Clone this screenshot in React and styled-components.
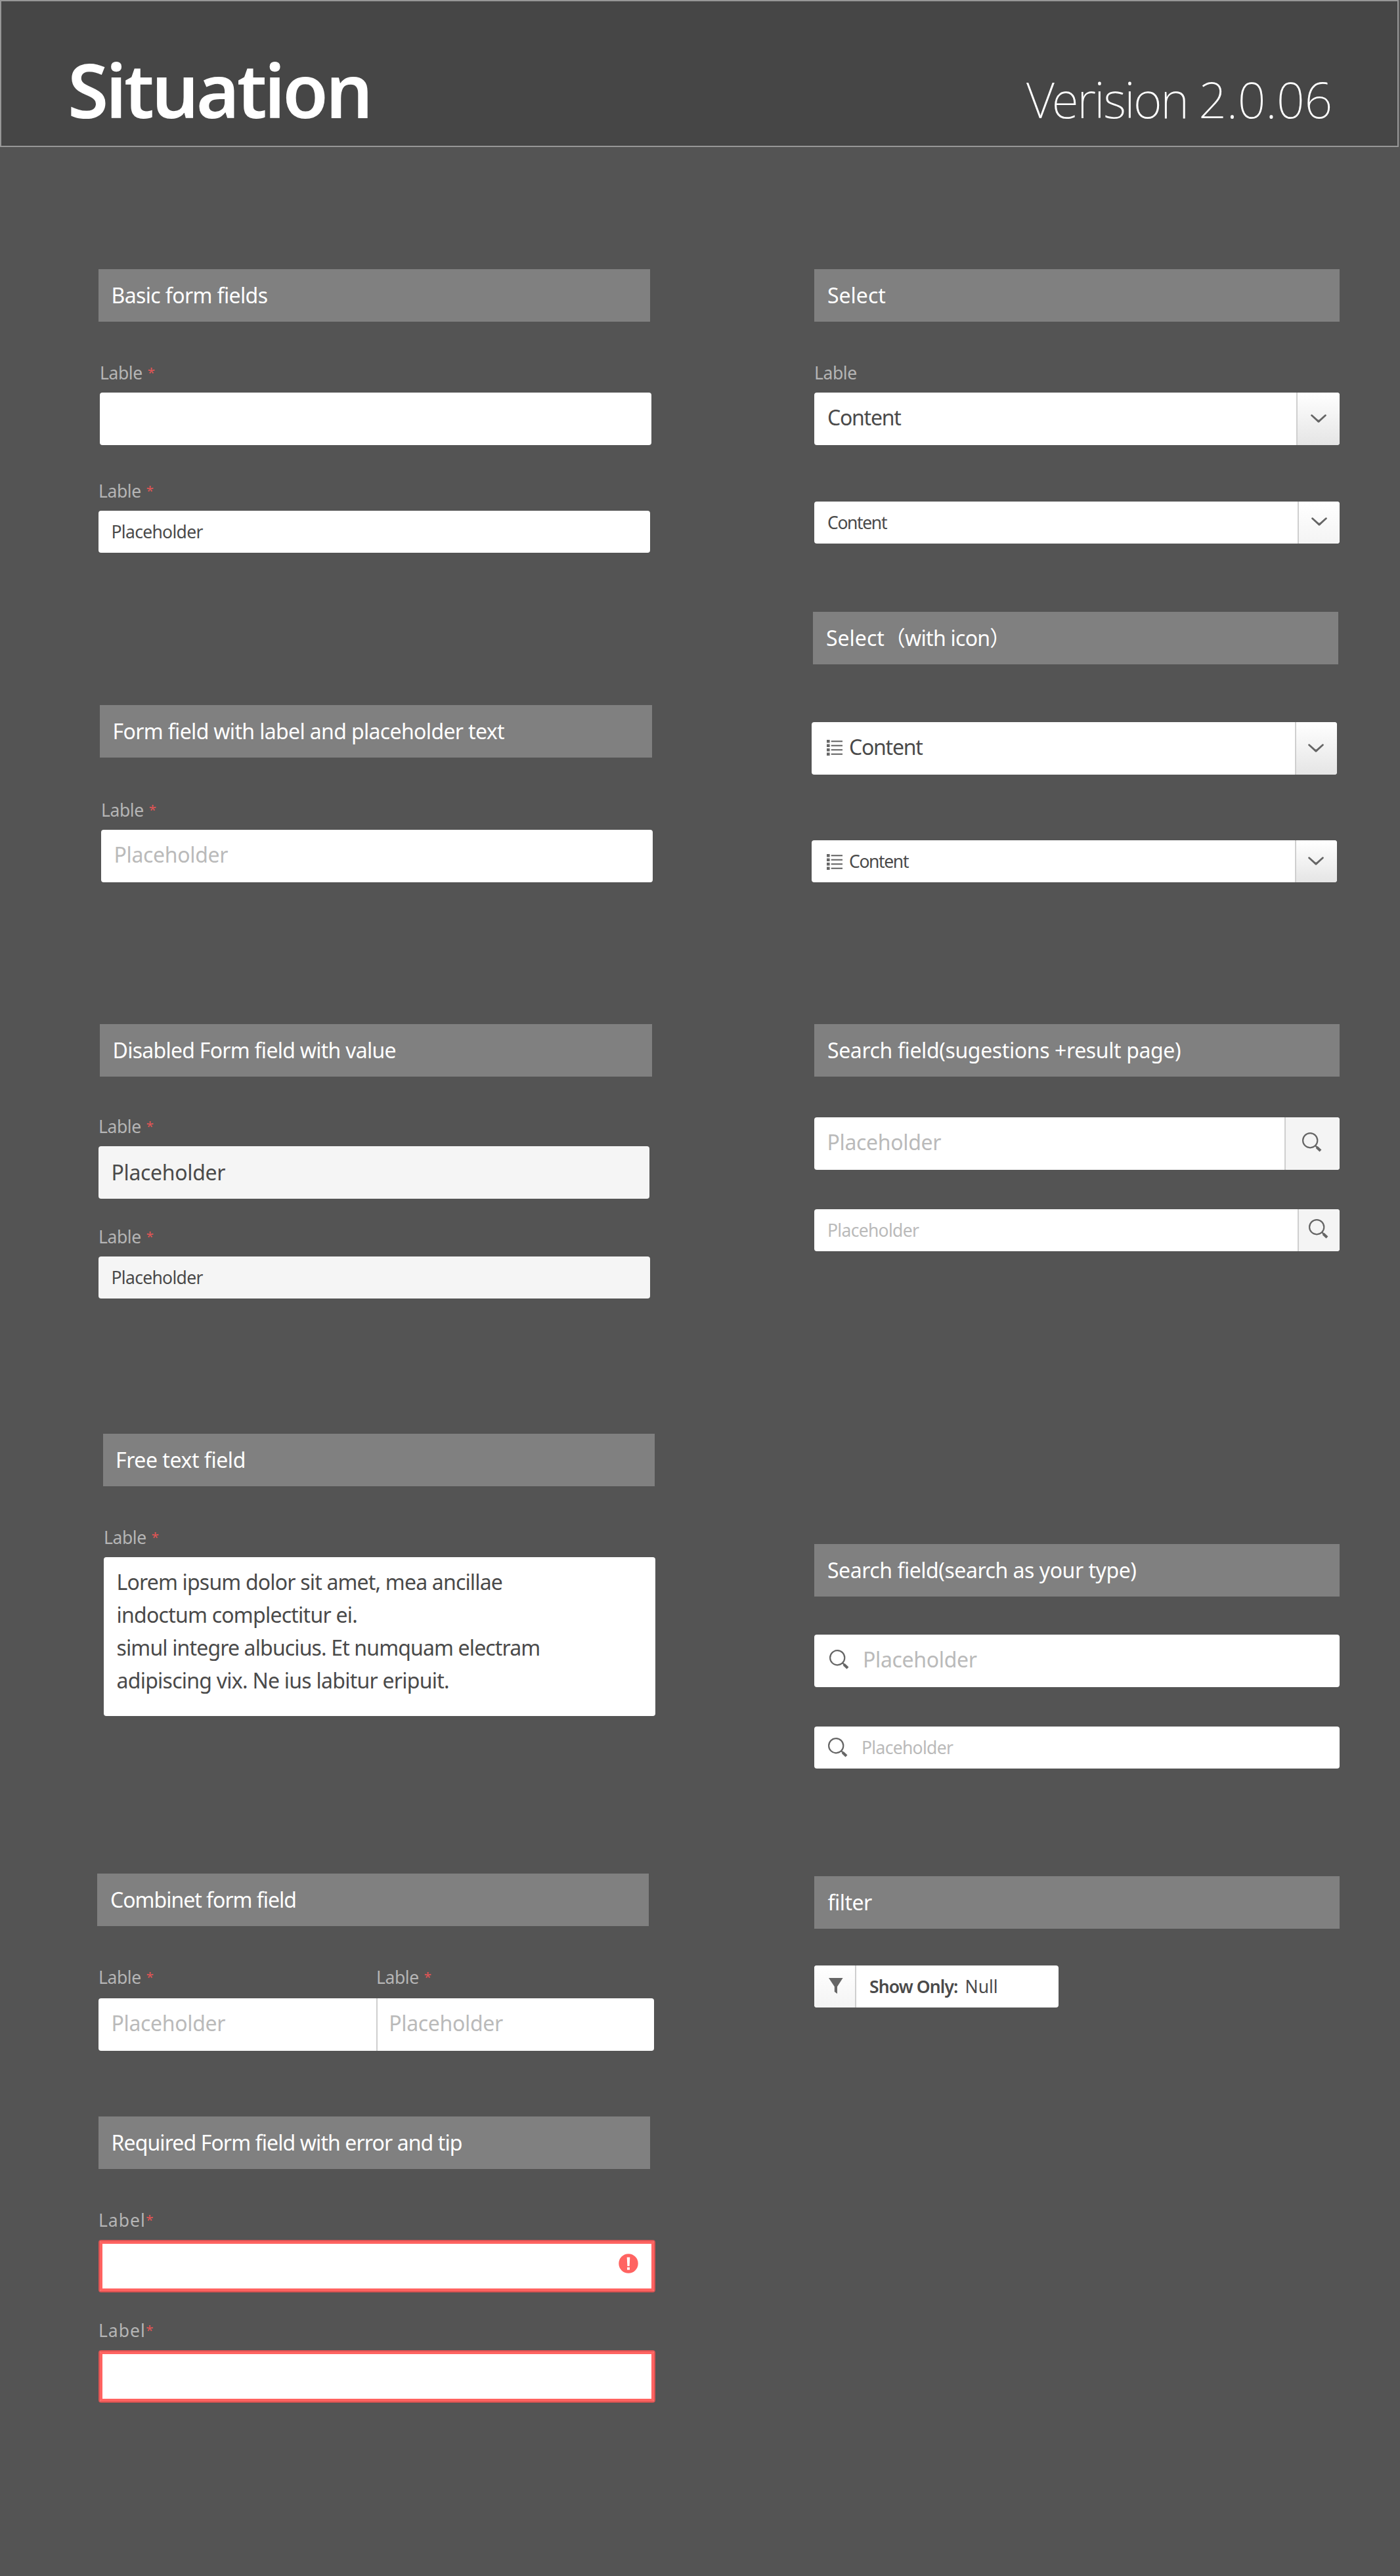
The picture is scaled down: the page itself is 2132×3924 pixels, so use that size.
import React from "react";
import styled, { createGlobalStyle, css } from "styled-components";

const GlobalStyle = createGlobalStyle`
  * { box-sizing: border-box; }
  body {
    margin: 0;
    background: #545454;
    font-family: "Noto Sans", "Noto Sans CJK SC", sans-serif;
    font-size: 32px;
    color: #4a4a4a;
  }
`;

const Page = styled.main`
  width: 2132px;
  height: 3924px;
  background: #545454;
`;

const Header = styled.header`
  display: flex;
  justify-content: space-between;
  align-items: baseline;
  width: 2130px;
  height: 224px;
  padding: 78px 99px 0 101px;
  border: 2px solid #979797;
  background: #464646;
  color: #fff;
`;

const Title = styled.h1`
  margin: 0;
  font-size: 113px;
  line-height: 112px;
  font-weight: 600;
  letter-spacing: -4.1px;
`;

const Version = styled.span`
  font-size: 75px;
  line-height: 80px;
  font-weight: 200;
  letter-spacing: -2.5px;
  white-space: nowrap;
`;

const VersionNumber = styled.span`
  letter-spacing: -0.3px;
`;

const Columns = styled.div`
  display: grid;
  grid-template-columns: 1088px 804px;
  padding: 186px 0 0 148px;
`;

const Column = styled.div`
  display: flex;
  flex-direction: column;
`;

const Section = styled.section`
  display: flex;
  flex-direction: column;
  margin-top: ${(p) => p.$gap || 0}px;
`;

const Bar = styled.h2`
  display: flex;
  align-items: center;
  width: ${(p) => p.$width || 840}px;
  height: 80px;
  margin: 0 0 0 ${(p) => p.$indent || 0}px;
  padding: 0 0 0 ${(p) => p.$pad || 19.5}px;
  background: #808080;
  color: #fff;
  font-size: 32px;
  line-height: 44px;
  font-weight: 400;
  white-space: nowrap;
  letter-spacing: ${(p) => p.$track || 0}px;
`;

const Untracked = styled.span`
  letter-spacing: 0;
`;

const Group = styled.div`
  width: ${(p) => p.$width || 840}px;
  margin: ${(p) => p.$gap}px 0 0 ${(p) => p.$indent || 0}px;
`;

const LabelRow = styled.div`
  display: flex;
  height: 50px;
  padding-bottom: 10px;
`;

const LabelText = styled.label`
  flex: 1;
  color: #b5b5b5;
  font-size: 26.5px;
  line-height: 40px;
  letter-spacing: ${(p) => (p.$wide ? 0.98 : -0.43)}px;
`;

const Star = styled.span`
  margin-left: ${(p) => (p.$wide ? 0.5 : 8)}px;
  color: #e05555;
  font-size: 20.5px;
  line-height: 0;
  vertical-align: 3px;
`;

const Control = styled.div`
  display: flex;
  height: ${(p) => (p.$small ? 64 : 80)}px;
  width: ${(p) => (p.$width ? `${p.$width}px` : "100%")};
  border-radius: 4px;
  overflow: hidden;
  background: ${(p) => (p.$disabled ? "#f5f5f5" : "#fff")};
  ${(p) =>
    p.$error &&
    css`
      border: 2px solid #dc5352;
      box-shadow: inset 0 0 0 4px #ff6361;
      justify-content: flex-end;
      padding: 19px 24px 0 0;
    `}
`;

const Value = styled.div`
  flex: 1;
  display: flex;
  align-items: center;
  gap: ${(p) => p.$gap || 10}px;
  padding-left: ${(p) => p.$pad || 19.5}px;
  padding-bottom: ${(p) => (p.$raised ? 4 : 0)}px;
  color: ${(p) => (p.$muted ? "#bababa" : "#4a4a4a")};
  font-size: ${(p) => (p.$small ? 26.5 : 32)}px;
  line-height: 44px;
  letter-spacing: ${(p) => p.$track || 0}px;
  white-space: nowrap;
`;

const Half = styled(Value)`
  & + & {
    border-left: 2px solid #cfcfcf;
    padding-left: 17px;
  }
`;

const Adornment = styled.div`
  display: flex;
  align-items: center;
  justify-content: center;
  width: ${(p) => p.$width}px;
  padding-bottom: ${(p) => p.$lift || 0}px;
  padding-right: ${(p) => p.$shift || 0}px;
  border-left: 2px solid #cfcfcf;
  background: ${(p) => p.$fill};
`;

const FilterButton = styled(Adornment)`
  border-left: 0;
  border-right: 2px solid #cfcfcf;
  padding-left: 4px;
`;

const Strong = styled.b`
  font-weight: 600;
  letter-spacing: -0.88px;
`;

const TextArea = styled.div`
  display: flex;
  flex-direction: column;
  height: 242px;
  padding: 13px 0 0 19.5px;
  border-radius: 4px;
  background: #fff;
  line-height: 50px;
`;

const TextLine = styled.span`
  white-space: nowrap;
  letter-spacing: ${(p) => p.$track}px;
`;

const Icon = styled.svg`
  display: block;
  flex: none;
  margin-top: ${(p) => p.$drop || 0}px;
`;

const STEEP = "linear-gradient(#ffffff, #e5e5e5)";
const SOFT = "linear-gradient(#ffffff, #f4f4f4)";
const FLAT = "#f4f4f4";

const ChevronIcon = () => (
  <Icon width="24" height="14" viewBox="0 0 24 14" fill="none" stroke="#666" strokeLinecap="round" strokeLinejoin="round">
    <path d="M1.6 1.8 L10 9.4 Q12 11.2 14 9.4 L22.4 1.8" strokeWidth="2.8" />
    <path d="M9 8.6 L12 10 L15 8.6 L12.9 11.4 Q12 12.2 11.1 11.4Z" fill="#666" strokeWidth="1.6" />
  </Icon>
);

const SearchIcon = () => (
  <Icon width="30" height="30" viewBox="0 0 30 30" fill="none" stroke="#666">
    <circle cx="12.2" cy="12.2" r="11.1" strokeWidth="2.2" />
    <path d="M20 20 L23 23" strokeWidth="2.4" />
    <path d="M22.2 22.4 L28 27.9" strokeWidth="4.2" />
  </Icon>
);

const LIST_ROWS = [0, 6.5, 13, 19.5];
const ListIcon = ({ drop }) => (
  <Icon width="24" height="24" viewBox="0 0 24 24" fill="#666" $drop={drop}>
    {LIST_ROWS.map((y) => (
      <g key={y}>
        <rect x="0" y={y} width="4.6" height="4.5" />
        <rect x="6.7" y={y + 1.2} width="17.3" height="2.1" />
      </g>
    ))}
  </Icon>
);

const FunnelIcon = () => (
  <Icon width="22" height="24" viewBox="0 0 22 24" fill="#666">
    <path d="M0 0 H21.6 L13 13.2 V24 L8.8 21 V13.2 Z" />
  </Icon>
);

const AlertIcon = () => (
  <Icon width="30" height="30" viewBox="0 0 30 30">
    <circle cx="15" cy="15" r="14.7" fill="#ff6361" />
    <path d="M12.7 5.6 H17.3 L16.6 19 H13.4 Z" fill="#fff" />
    <rect x="13" y="20.8" width="4" height="3.8" fill="#fff" />
  </Icon>
);

const Label = ({ text = "Lable", required = true, wide }) => (
  <LabelText $wide={wide}>
    {text}
    {required && <Star $wide={wide}>*</Star>}
  </LabelText>
);

const Placeholder = ({ small, ...rest }) => (
  <Value $small={small} $track={small ? -0.7 : -0.34} {...rest}>
    Placeholder
  </Value>
);

const Select = ({ small, icon, fill, width = 66, lift, shift }) => (
  <Control $small={small}>
    <Value $small={small} $raised={!small} $pad={icon ? 23 : 20} $track={small ? -1.36 : -1.25}>
      {icon && <ListIcon drop={2} />}
      <span>Content</span>
    </Value>
    <Adornment $width={width} $fill={fill} $lift={lift} $shift={shift}>
      <ChevronIcon />
    </Adornment>
  </Control>
);

const FREE_TEXT = [
  ["Lorem ipsum dolor sit amet, mea ancillae", -0.82],
  ["indoctum complectitur ei.", -0.76],
  ["simul integre albucius. Et numquam electram", -0.86],
  ["adipiscing vix. Ne ius labitur eripuit.", -0.75],
];

export default function App() {
  return (
    <Page>
      <GlobalStyle />
      <Header>
        <Title>Situation</Title>
        <Version>Verision <VersionNumber>2.0.06</VersionNumber></Version>
      </Header>

      <Columns>
        <Column>
          <Section>
            <Bar $indent={2} $track={-0.62}>Basic form fields</Bar>
            <Group $gap={58} $indent={4}>
              <LabelRow><Label /></LabelRow>
              <Control />
            </Group>
            <Group $gap={50} $indent={2}>
              <LabelRow><Label /></LabelRow>
              <Control $small><Placeholder small $pad={19.5} /></Control>
            </Group>
          </Section>

          <Section $gap={232}>
            <Bar $indent={4} $width={841} $track={-0.65}>Form field with label and placeholder text</Bar>
            <Group $gap={60} $indent={6}>
              <LabelRow><Label /></LabelRow>
              <Control><Placeholder $muted $raised /></Control>
            </Group>
          </Section>

          <Section $gap={216}>
            <Bar $indent={4} $width={841} $track={-0.73}>Disabled Form field with value</Bar>
            <Group $gap={56} $indent={2}>
              <LabelRow><Label /></LabelRow>
              <Control $disabled $width={839}><Placeholder /></Control>
            </Group>
            <Group $gap={38} $indent={2}>
              <LabelRow><Label /></LabelRow>
              <Control $small $disabled><Placeholder small $pad={19.5} /></Control>
            </Group>
          </Section>

          <Section $gap={206}>
            <Bar $indent={8.5} $track={-0.45}>Free text field</Bar>
            <Group $gap={58} $indent={10}>
              <LabelRow><Label /></LabelRow>
              <TextArea>
                {FREE_TEXT.map(([line, track]) => (
                  <TextLine key={line} $track={track}>{line}</TextLine>
                ))}
              </TextArea>
            </Group>
          </Section>

          <Section $gap={240}>
            <Bar $track={-1.01} $pad={20}>Combinet form field</Bar>
            <Group $gap={58} $indent={2} $width={846}>
              <LabelRow><Label /><Label /></LabelRow>
            </Group>
            <Group $gap={2} $indent={2} $width={846}>
              <Control>
                <Half $muted $raised $track={-0.34}>Placeholder</Half>
                <Half $muted $raised $track={-0.34}>Placeholder</Half>
              </Control>
            </Group>
          </Section>

          <Section $gap={100}>
            <Bar $indent={2} $track={-0.9}>Required Form field with error and tip</Bar>
            <Group $gap={58} $indent={2} $width={848}>
              <LabelRow><Label text="Label" wide /></LabelRow>
              <Control $error><AlertIcon /></Control>
            </Group>
            <Group $gap={38} $indent={2} $width={848}>
              <LabelRow><Label text="Label" wide /></LabelRow>
              <Control $error />
            </Group>
          </Section>
        </Column>

        <Column>
          <Section>
            <Bar $indent={4} $width={800} $pad={20}>Select</Bar>
            <Group $gap={58} $indent={4} $width={800}>
              <LabelRow><Label required={false} /></LabelRow>
              <Select fill={STEEP} />
            </Group>
            <Group $gap={86} $indent={4} $width={800}>
              <Select small fill={SOFT} width={64} lift={2} />
            </Group>
          </Section>

          <Section $gap={104}>
            <Bar $indent={2} $width={800} $pad={20} $track={-0.73}>
              <span><Untracked>Select</Untracked>（with icon）</span>
            </Bar>
            <Group $gap={88} $width={800}>
              <Select icon fill={STEEP} width={64} shift={2} />
            </Group>
            <Group $gap={100} $width={800}>
              <Select small icon fill={STEEP} width={64} shift={2} />
            </Group>
          </Section>

          <Section $gap={216}>
            <Bar $indent={4} $width={800} $pad={20} $track={-0.38}>Search field(sugestions +result page)</Bar>
            <Group $gap={62} $indent={4} $width={800}>
              <Control>
                <Placeholder $muted $raised />
                <Adornment $width={84} $fill={FLAT} $lift={4} $shift={2}><SearchIcon /></Adornment>
              </Control>
            </Group>
            <Group $gap={60} $indent={4} $width={800}>
              <Control $small>
                <Placeholder small $muted $pad={20} />
                <Adornment $width={64} $fill={FLAT} $lift={4} $shift={2}><SearchIcon /></Adornment>
              </Control>
            </Group>
          </Section>

          <Section $gap={446}>
            <Bar $indent={4} $width={800} $pad={20} $track={-0.46}>Search field(search as your type)</Bar>
            <Group $gap={58} $indent={4} $width={800}>
              <Control>
                <Value $muted $raised $pad={23} $gap={21} $track={-0.34}>
                  <SearchIcon />
                  <span>Placeholder</span>
                </Value>
              </Control>
            </Group>
            <Group $gap={60} $indent={4} $width={800}>
              <Control $small>
                <Value $small $muted $pad={21} $gap={21} $track={-0.7}>
                  <SearchIcon />
                  <span>Placeholder</span>
                </Value>
              </Control>
            </Group>
          </Section>

          <Section $gap={164}>
            <Bar $indent={4} $width={800} $pad={20.5} $track={-0.5}>filter</Bar>
            <Group $gap={56} $indent={4} $width={372}>
              <Control $small>
                <FilterButton $width={64} $fill={SOFT} $lift={2}><FunnelIcon /></FilterButton>
                <Value $small $pad={20} $gap={11}>
                  <Strong>Show Only:</Strong>
                  <span>Null</span>
                </Value>
              </Control>
            </Group>
          </Section>
        </Column>
      </Columns>
    </Page>
  );
}
